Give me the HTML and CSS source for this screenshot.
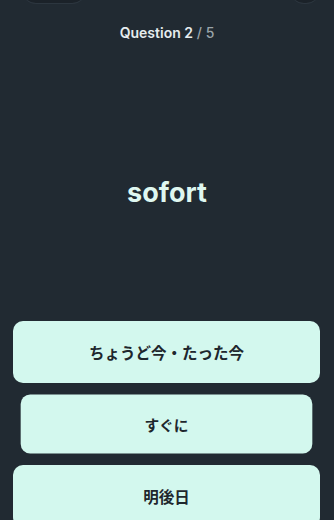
FILE: index.html
```html
<!DOCTYPE html>
<html lang="ja">
<head>
<meta charset="utf-8">
<link rel="stylesheet" href="styles.css">
</head>
<body>
<div class="screen">
  <div class="top-pill top-pill-left"></div>
  <div class="top-pill top-pill-right"></div>
  <div class="progress"><span class="current">Question 2</span> <span class="total">/ 5</span></div>
  <div class="word-area"><div class="word">sofort</div></div>
  <div class="options">
    <div class="option">ちょうど今・たった今</div>
    <div class="option pressed">すぐに</div>
    <div class="option">明後日</div>
  </div>
</div>
</body>
</html>
```
FILE: styles.css
```css
html, body {
  margin: 0;
  padding: 0;
  background: #212a32;
}
.screen {
  position: relative;
  width: 334px;
  height: 520px;
  overflow: hidden;
  display: flex;
  flex-direction: column;
  font-family: "Inter", "Noto Sans CJK JP", sans-serif;
  background: #212a32;
}
.top-pill {
  position: absolute;
  top: -20px;
  height: 23px;
  background: #1b2229;
  border-radius: 0 0 14px 14px;
  box-shadow: 0 1px 0 #2c363f;
}
.top-pill-left { left: 22px; width: 64px; }
.top-pill-right { left: 290px; width: 30px; }
.progress {
  flex: none;
  padding-top: 23px;
  height: 20px;
  line-height: 20px;
  text-align: center;
  font-size: 14px;
  font-weight: 500;
}
.current { color: #e6ecee; font-weight: 600; }
.total { color: #9aa4aa; }
.word-area {
  flex: none;
  height: 278px;
  display: flex;
  align-items: center;
  justify-content: center;
}
.word {
  color: #dff7f0;
  font-size: 27px;
  font-weight: 700;
  margin-top: 20px;
}
.options {
  flex: none;
  display: flex;
  flex-direction: column;
  gap: 10px;
  padding: 0 14px 0 13px;
}
.option {
  height: 62px;
  flex: none;
  background: #d3f8ee;
  border-radius: 10px;
  display: flex;
  align-items: center;
  justify-content: center;
  color: #1e272d;
  font-family: "Noto Sans CJK JP", sans-serif;
  font-size: 15.5px;
  font-weight: 700;
}
.option.pressed {
  transform: scale(0.95);
}
```
